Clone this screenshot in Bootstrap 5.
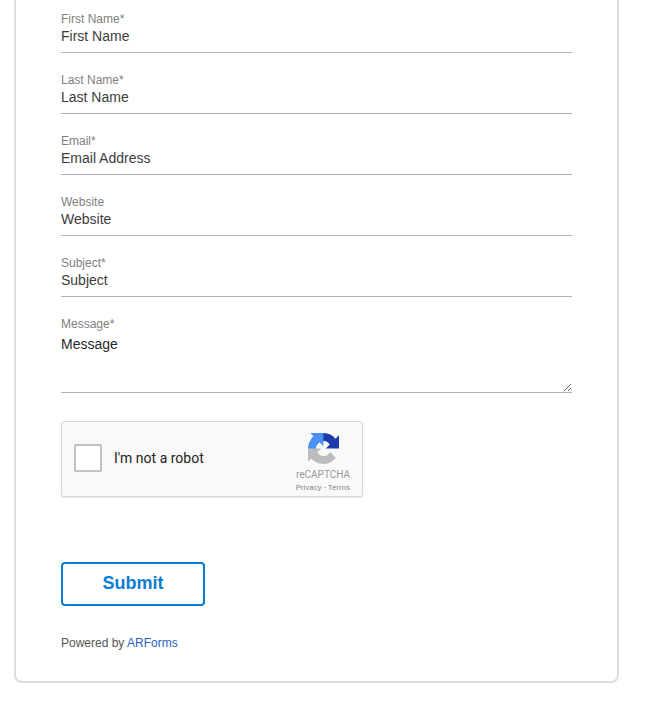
<!DOCTYPE html>
<html lang="en">
<head>
<meta charset="utf-8">
<title>Contact form</title>
<link href="https://cdn.jsdelivr.net/npm/bootstrap@5.3.0/dist/css/bootstrap.min.css" rel="stylesheet">
<style>
html,body{height:704px;overflow:hidden;background:#fff;font-family:"Liberation Sans",Arial,sans-serif}
.form-shell{width:605px;height:683px;margin-left:14px;border:2px solid #dcdcdc;border-top:0;border-radius:0 0 8px 8px;padding:12px 45px 0 45px}
.field-wrap{height:61px}
.field-label{display:block;font-size:12px;line-height:14px;color:#808080;margin:0}
.field-input.form-control{display:block;width:511px;height:27px;padding:0 0 6px;border:0;border-bottom:1px solid #b0b0b0;border-radius:0;font-size:14px;line-height:20px;color:#3c3c3c;background:transparent;box-shadow:none}
.field-input::placeholder{color:#3c3c3c;opacity:1}
textarea.field-input.form-control{height:62px;min-height:0;padding:3px 0 0;resize:vertical;color:#2a2a2a}
.msg-wrap{height:104px}
.captcha-box{width:302px;height:76px;background:#f9f9f9;border:1px solid #d6d6d6;border-radius:3px;box-shadow:0 1px 2px rgba(0,0,0,.1);padding:0 11px 0 12px}
.captcha-left{padding-bottom:2px}
.captcha-check{width:28px;height:28px;background:#fff;border:2px solid #c1c1c1;border-radius:2px}
.captcha-text{font-family:Roboto,sans-serif;font-size:14px;color:#222;margin-left:12px}
.captcha-logo{width:56px;align-self:flex-start;padding-top:11px;font-family:Roboto,sans-serif;text-align:center;color:#777}
.captcha-logo svg{margin-bottom:1px}
.captcha-name{font-size:10px;line-height:12px;color:#999;margin-top:5px}
.captcha-links{font-size:8px;line-height:10px;margin-top:2px;color:#8a8a8a;white-space:nowrap}
.send-btn.btn{display:block;width:144px;height:44px;margin-top:65px;padding:0 0 2px;border:2px solid #0c7cd5;border-radius:4px;background:#fff;color:#0c7cd5;font-size:18px;font-weight:700}
.credit-line{font-size:12px;line-height:14px;color:#555;margin:30px 0 0}
.credit-line a{color:#2a62c4;text-decoration:none}
</style>
</head>
<body>
<div class="form-shell">
<form>
<div class="field-wrap"><label class="field-label" for="f1">First Name*</label><input id="f1" class="form-control field-input" placeholder="First Name"></div>
<div class="field-wrap"><label class="field-label" for="f2">Last Name*</label><input id="f2" class="form-control field-input" placeholder="Last Name"></div>
<div class="field-wrap"><label class="field-label" for="f3">Email*</label><input id="f3" class="form-control field-input" placeholder="Email Address"></div>
<div class="field-wrap"><label class="field-label" for="f4">Website</label><input id="f4" class="form-control field-input" placeholder="Website"></div>
<div class="field-wrap"><label class="field-label" for="f5">Subject*</label><input id="f5" class="form-control field-input" placeholder="Subject"></div>
<div class="msg-wrap"><label class="field-label" for="f6">Message*</label><textarea id="f6" class="form-control field-input">Message</textarea></div>
<div class="captcha-box d-flex align-items-center justify-content-between">
  <div class="captcha-left d-flex align-items-center"><div class="captcha-check"></div><span class="captcha-text">I'm not a robot</span></div>
  <div class="captcha-logo">
    <svg width="31" height="31" viewBox="0 0 64 64" class="d-block mx-auto">
      <path fill="#1c3aa9" d="M64 31.955l-.033-1.37V4.687l-7.16 7.16C50.948 4.674 42.033.093 32.05.093c-10.4 0-19.622 4.96-25.458 12.64l11.736 11.86a15.55 15.55 0 0 1 4.754-5.334c2.05-1.6 4.952-2.906 8.968-2.906.485 0 .86.057 1.135.163 4.976.393 9.288 3.14 11.828 7.124l-8.307 8.307c10.522-.04 22.4-.066 27.295.005"/>
      <path fill="#4a90f5" d="M31.862.094l-1.37.033H4.594l7.16 7.16C4.58 13.147 0 22.06 0 32.046c0 10.4 4.96 19.622 12.64 25.458l11.86-11.736a15.55 15.55 0 0 1-5.334-4.754c-1.6-2.05-2.906-4.952-2.906-8.968 0-.485.057-.86.163-1.135.393-4.976 3.14-9.288 7.124-11.828l8.307 8.307c-.04-10.522-.066-22.4.005-27.295"/>
      <path fill="#bdbdbd" d="M.001 32.045l.033 1.37v25.898l7.16-7.16c5.86 7.173 14.774 11.754 24.76 11.754 10.4 0 19.622-4.96 25.458-12.64l-11.736-11.86a15.55 15.55 0 0 1-4.754 5.334c-2.05 1.6-4.952 2.906-8.968 2.906-.485 0-.86-.057-1.135-.163-4.976-.393-9.288-3.14-11.828-7.124l8.307-8.307c-10.522.04-22.4.066-27.295-.005"/>
    </svg>
    <div class="captcha-name">reCAPTCHA</div>
    <div class="captcha-links">Privacy - Terms</div>
  </div>
</div>
<button type="button" class="btn send-btn">Submit</button>
<p class="credit-line">Powered by <a href="#">ARForms</a></p>
</form>
</div>
</body>
</html>
